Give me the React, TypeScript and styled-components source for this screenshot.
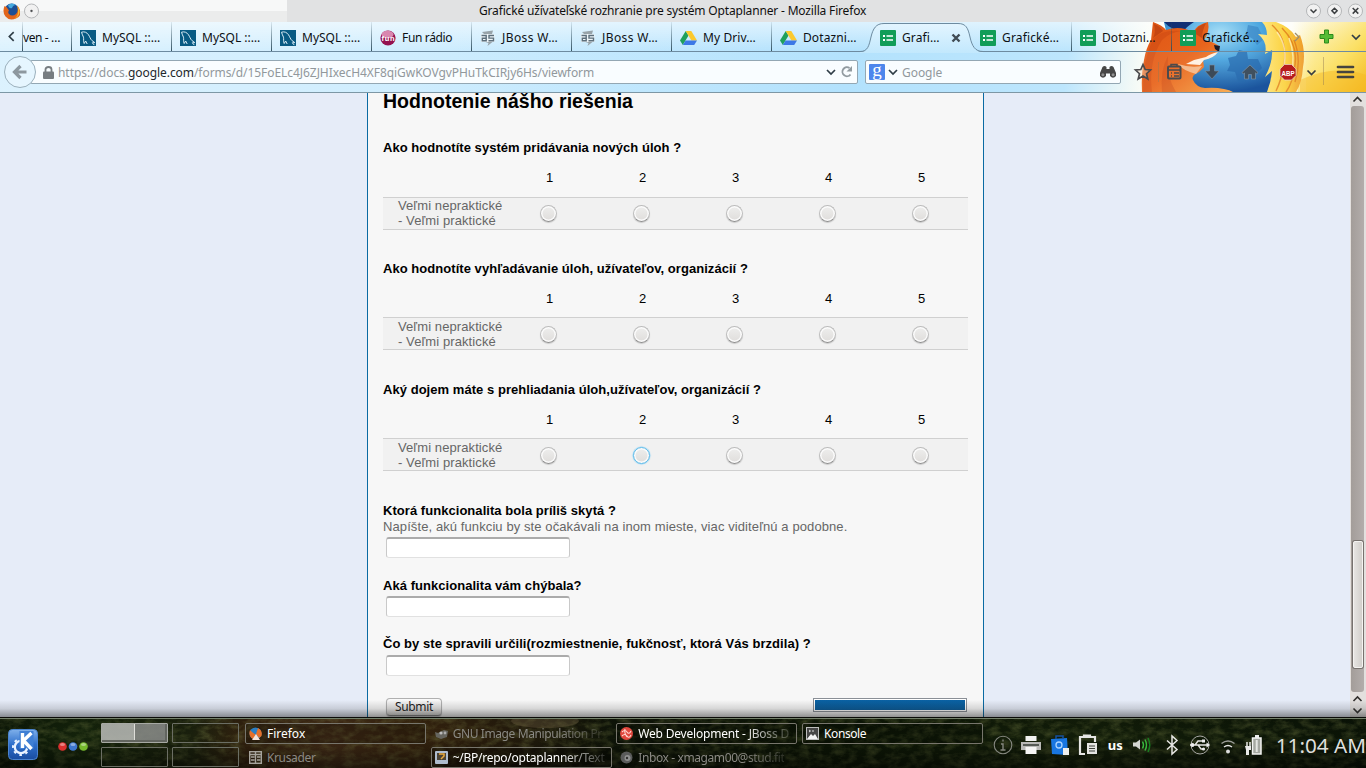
import React from 'react';
import styled, { createGlobalStyle, css } from 'styled-components';

const ui = `"Noto Sans", "Open Sans", sans-serif`;

const Global = createGlobalStyle`
  * { box-sizing: border-box; }
  body { margin: 0; background: #e6ecf8; overflow: hidden; }
  svg { display: block; flex: none; }
`;

const Screen = styled.div`
  width: 1366px;
  height: 768px;
  display: flex;
  flex-direction: column;
  overflow: hidden;
  font-family: ${ui};
`;

/* ---------- window title ---------- */
const TitleBar = styled.header`
  height: 22px;
  flex: none;
  display: grid;
  grid-template-columns: 287px 1fr 60px;
  align-items: center;
  background: #e1e2e3;
`;
const TitleLeft = styled.div`
  height: 22px;
  display: flex;
  align-items: center;
  gap: 4px;
  padding-left: 3px;
  background: linear-gradient(#f7f8f8 0 50%, #ebecec 50%);
`;
const TitleText = styled.div`
  font-size: 12px;
  line-height: 20px;
  letter-spacing: -0.17px;
  color: #101010;
  padding-left: 192px;
  white-space: nowrap;
`;
const TitleButtons = styled.div`
  display: flex;
  gap: 6px;
`;

/* ---------- browser chrome ---------- */
const Chrome = styled.div`
  position: relative;
  height: 71px;
  flex: none;
  display: flex;
  flex-direction: column;
  border-bottom: 1px solid #7d97a5;
  background: linear-gradient(rgba(255, 255, 255, 0.55), rgba(255, 255, 255, 0) 40%),
    linear-gradient(97deg, #dcf2fe 0, #cfedfe 30%, #b3e2fd 62%, #bde6fd 78%, #fdfdf5 84%, #fdfdf5 94%, #fbe98c 96%, #f6d749 100%);
`;
const Persona = styled.svg`
  position: absolute;
  left: 1140px;
  top: 0;
`;
const ActiveShape = styled.svg`
  position: absolute;
  left: 860px;
  top: 0;
`;
const TabRow = styled.div`
  position: relative;
  height: 30px;
  display: flex;
  flex: none;
  border-bottom: 1px solid #6d8ba0;
`;
const ScrollLeft = styled.div`
  width: 22px;
  display: flex;
  align-items: center;
  justify-content: center;
`;
const Tab = styled.div<{ $w?: number; $edge?: boolean; $active?: boolean }>`
  width: ${p => p.$w ?? 100}px;
  flex: none;
  display: flex;
  align-items: center;
  gap: 6px;
  padding: 2px 0 0 ${p => (p.$w ? 0 : 8)}px;
  border-left: 1px solid transparent;
  ${p => p.$edge && css`border-image: linear-gradient(rgba(40, 70, 90, 0.05), #32505f) 1;
    border-width: 0 0 0 1px; border-style: solid;`}
  z-index: ${p => (p.$active ? 2 : 1)};
`;
const TabLabel = styled.span<{ $sp?: number }>`
  font-size: 12px;
  line-height: 16px;
  letter-spacing: ${p => p.$sp ?? 0.05}px;
  color: #0c1014;
  white-space: nowrap;
`;
const TabEnd = styled.div`
  flex: 1;
  display: flex;
  align-items: center;
  padding-left: 21px;
  gap: 17px;
  z-index: 1;
`;
const NavRow = styled.div`
  position: relative;
  height: 40px;
  display: flex;
  align-items: center;
`;
const BackButton = styled.div`
  width: 32px;
  height: 32px;
  margin-left: 4px;
  border-radius: 50%;
  border: 1px solid #9bb0bc;
  background: #e6f6ff;
  display: flex;
  align-items: center;
  justify-content: center;
  z-index: 1;
`;
const Field = styled.div<{ $w: number; $ml: number; $pl: number }>`
  width: ${p => p.$w}px;
  margin-left: ${p => p.$ml}px;
  padding: 0 4px 0 ${p => p.$pl}px;
  height: 24px;
  display: flex;
  align-items: center;
  border: 1px solid #93a7b3;
  border-radius: 2px;
  background: #f9fdff;
`;
const Url = styled.span`
  flex: 1;
  margin-left: 4px;
  font-size: 12px;
  letter-spacing: -0.06px;
  color: #91989c;
  white-space: nowrap;
  b { font-weight: 400; color: #22282c; }
`;
const GoogleBadge = styled.span`
  width: 16px;
  height: 16px;
  margin-right: 3px;
  border-radius: 1px;
  background: #4d86ec;
  color: #fff;
  font: 19px/11px "Liberation Serif", serif;
  text-align: center;
`;

/* ---------- page ---------- */
const Page = styled.main`
  position: relative;
  flex: 1;
  min-height: 0;
  overflow: hidden;
  display: flex;
  background: #e6ecf8;
`;
const Shade = styled.div`
  position: absolute;
  left: 0;
  right: 0;
  bottom: 0;
  height: 17px;
  background: linear-gradient(rgba(20, 20, 20, 0), rgba(20, 20, 20, 0.14) 50%, rgba(20, 20, 20, 0.45));
`;
const Gutter = styled.div`
  width: 367px;
  flex: none;
`;
const Form = styled.form`
  width: 617px;
  padding: 0 15px;
  background: #f7f7f7;
  border-left: 1px solid #0a6aa3;
  border-right: 1px solid #0a6aa3;
  font-family: "Liberation Sans", Arial, sans-serif;
  font-size: 13px;
  line-height: 15px;
  color: #000;
`;
const Heading = styled.h2`
  margin: -3px 0 27px;
  font-size: 19.5px;
  line-height: 23px;
  letter-spacing: 0.03px;
`;
const Question = styled.section<{ $h: number }>`
  height: ${p => p.$h}px;
`;
const QTitle = styled.div`
  font-weight: 700;
  letter-spacing: 0.045px;
  white-space: nowrap;
`;
const Help = styled.div`
  color: #666;
  line-height: 17px;
  margin-bottom: -1px;
  letter-spacing: 0.095px;
`;
const Scale = styled.div`
  display: grid;
  grid-template-columns: 119px repeat(5, 93px);
`;
const Num = styled.div<{ $h: number }>`
  height: ${p => p.$h}px;
  padding: 15px 0 0 2px;
  text-align: center;
`;
const ScaleRow = styled(Scale)`
  height: 33px;
  width: 585px;
  background: #f1f1f1;
  border: solid #d0d0d0;
  border-width: 1px 0;
`;
const RowLabel = styled.div<{ $pt: number }>`
  padding: ${p => p.$pt}px 0 0 15px;
  color: #666;
  letter-spacing: 0.09px;
  white-space: nowrap;
`;
const RadioCell = styled.div<{ $pt: number }>`
  display: flex;
  justify-content: center;
  padding-top: ${p => p.$pt}px;
`;
const Radio = styled.span<{ $hot?: boolean }>`
  width: 17px;
  height: 17px;
  border-radius: 50%;
  border: 1px solid ${p => (p.$hot ? '#5bbcec' : '#bdbdbd')};
  border-bottom-color: ${p => (p.$hot ? '#5bbcec' : '#8d8d8d')};
  background: linear-gradient(#eeeeed, #dfdddb);
  box-shadow: inset 0 0 0 1.5px #fbfbfb, ${p => (p.$hot ? '0 0 1px 0.5px #8fd2f5' : '0 1px 1px rgba(0,0,0,.16)')};
`;
const TextBox = styled.input<{ $mt?: number }>`
  display: block;
  width: 184px;
  height: 21px;
  margin: ${p => p.$mt ?? 3}px 0 0 3px;
  padding: 0;
  border: 1px solid #c9c9c9;
  border-top: 2px solid #ababab;
  border-bottom-color: #e1e1e1;
  border-radius: 3px;
  background: #fff;
`;
const Footer = styled.div`
  display: flex;
  justify-content: space-between;
  padding: 0 1px 0 3px;
`;
const Submit = styled.button`
  width: 56px;
  height: 18px;
  padding: 0;
  border: 1px solid #b0b0b0;
  border-bottom-color: #858585;
  border-radius: 4px;
  background: linear-gradient(#fafafa, #d6d4d2);
  box-shadow: 0 1px 1px rgba(0, 0, 0, 0.2);
  font: 12px/14px ${ui};
  letter-spacing: -0.3px;
  color: #1c1c1c;
`;
const Progress = styled.div`
  width: 154px;
  height: 14px;
  border: 1px solid #8a8f96;
  padding: 1px;
  background: linear-gradient(#0a62a4, #0a5b98) content-box, #fff;
`;
const Scrollbar = styled.div`
  width: 16px;
  margin-left: auto;
  display: flex;
  flex-direction: column;
  align-items: center;
  background: #e3e0de;
`;
const Track = styled.div`
  width: 13px;
  height: 586px;
  margin: 1px 1px 0 0;
  padding: 435px 1px 0 2px;
  border-radius: 3px;
  background: linear-gradient(90deg, #a39d99, #b3adab);
`;
const Thumb = styled.div`
  height: 127px;
  border: 1px solid #f5f3f1;
  border-radius: 2px;
  box-shadow: 0 0 0 1px #77726e;
  background: linear-gradient(90deg, #e6e4e1, #d2cfcb);
`;

/* ---------- panel ---------- */
const Panel = styled.footer`
  position: relative;
  height: 51px;
  flex: none;
  display: flex;
  background: #0c1408;
  color: #fff;
  overflow: hidden;
`;
const Ground = styled.svg`
  position: absolute;
  left: 0;
  top: 0;
`;
const Launch = styled.div`
  position: relative;
  width: 101px;
  display: flex;
  align-items: center;
  padding: 3px 0 0 8px;
  gap: 19px;
`;
const Pager = styled.div`
  position: relative;
  width: 144px;
  padding-top: 6px;
  display: grid;
  grid-template: 20px 20px / 67px 67px;
  gap: 4px;
`;
const Desk = styled.div<{ $on?: boolean }>`
  border: 1px solid ${p => (p.$on ? '#a7a9a4' : '#6b6e64')};
  border-radius: 1px;
  ${p => p.$on && css`background: linear-gradient(90deg, rgba(178, 180, 176, 0.9) 0 32px, #deded9 32px 33px, rgba(138, 140, 138, 0.85) 33px);
    box-shadow: inset -2px -2px 0 #62655f;`}
`;
const Tasks = styled.div`
  position: relative;
  width: 750px;
  padding-top: 6px;
  display: grid;
  grid-template-rows: 21px 21px;
  grid-template-columns: repeat(4, 181px);
  grid-auto-flow: row;
  gap: 3px 4.7px;
`;
const Task = styled.div<{ $box?: boolean; $dim?: boolean; $fade?: boolean; $sp?: number }>`
  display: flex;
  align-items: center;
  gap: 5px;
  padding-left: 3px;
  border: 1px solid ${p => (p.$box ? '#77756c' : 'transparent')};
  border-radius: 2px;
  font-size: 12px;
  line-height: 17px;
  letter-spacing: ${p => p.$sp ?? 0}px;
  white-space: nowrap;
  color: ${p => (p.$dim ? '#8a8983' : '#fff')};
  background: ${p => (p.$box ? 'rgba(0,0,0,.22)' : 'none')};
  span {
    ${p => p.$fade && css`mask-image: linear-gradient(90deg, #000 105px, rgba(0, 0, 0, 0.15) 152px);`}
  }
`;
const Tray = styled.div`
  position: relative;
  flex: 1;
  display: flex;
  align-items: center;
  padding-top: 4px;
`;
const TraySlot = styled.div<{ $w: number }>`
  width: ${p => p.$w}px;
  flex: none;
  display: flex;
  justify-content: center;
  font-size: 13px;
  font-weight: 700;
  line-height: 20px;
`;
const Clock = styled.div`
  padding-left: 7px;
  font-size: 20.7px;
  line-height: 26px;
  white-space: nowrap;
  color: #dfdfdd;
`;

/* ---------- drawings ---------- */
const Chevron = ({ dir = 'down', s = 10, c = '#2f3d46', w = 1.7 }: { dir?: string; s?: number; c?: string; w?: number }) => {
  const d: Record<string, string> = { down: 'M1 3l4 4 4-4', up: 'M1 7l4-4 4 4', left: 'M7 1L3 5l4 4', right: 'M3 1l4 4-4 4' };
  return <svg width={s} height={s} viewBox="0 0 10 10" fill="none" stroke={c} strokeWidth={w}><path d={d[dir]} /></svg>;
};
const WinButton = ({ kind }: { kind: string }) => (
  <svg width="15" height="16" viewBox="0 0 15 16">
    <circle cx="7.5" cy="8" r="7" fill="#f1f1f1" stroke="#b4b6b8" />
    <g fill="none" stroke="#3b3e40" strokeWidth="1.5">
      {kind === 'min' && <path d="M4.5 6.5l3 3 3-3" />}
      {kind === 'max' && <path d="M7.5 5.200l2.600 2.600-2.600 2.600-2.600-2.600z" />}
      {kind === 'close' && <path d="M4.700 5l5.600 5.600M10.300 5l-5.600 5.600" />}
      {kind === 'dot' && <circle cx="7.5" cy="8" r=".4" />}
    </g>
  </svg>
);
const FirefoxLogo = ({ s = 17 }: { s?: number }) => (
  <svg width={s} height={s} viewBox="0 0 17 17">
    <circle cx="8.700" cy="8" r="7.400" fill="#1d4f95" />
    <path d="M5 2q4-3 8 0-3 0-4 3-3 1-4-3z" fill="#45a9de" />
    <path d="M1.500 3Q-1 9 2.500 13.500T13 15.500 16 5q-1-2-2-2.500 2 5-1 8.500-4 3-7 0-1.500-2 0-3.500L3.500 4z" fill="#e2651b" />
    <path d="M14 2.500q3.500 4 2.300 8T10 16.600q4-2 4.800-6T14 2.500z" fill="#f8b62c" />
  </svg>
);
const MySql = () => (
  <svg width="16" height="16" viewBox="0 0 16 16">
    <rect width="16" height="16" fill="#085a83" />
    <path d="M1.500 2.200c3-1 5.500.3 7 2.600 1.300 2 2 4.300 3.300 5.600l3 2.200-2.500.2 2 2.300M1.500 2.200c.2 2 1.600 3.300 2 5 .4 2-.3 4 .7 6.300l1.500-2.500 1.500 3" fill="none" stroke="#d7ebf5" strokeWidth="1" />
  </svg>
);
const FunIcon = () => (
  <svg width="16" height="16" viewBox="0 0 16 16">
    <circle cx="8" cy="8" r="7.600" fill="#94124f" />
    <ellipse cx="7.500" cy="4.500" rx="6" ry="3.800" fill="#d987af" />
    <text x="1.500" y="10.500" fontSize="7.500" fontWeight="700" fill="#fff" fontFamily="Liberation Sans" textLength="13">fun</text>
  </svg>
);
const JBoss = () => (
  <svg width="16" height="16" viewBox="0 0 16 16">
    <path d="M2 2l11-1.500-1 3.500H4zM4 11.500h9L7.500 16l1-3z" fill="#98a3a9" />
    <rect x="1" y="4" width="13.500" height="8" fill="#eef5f8" />
    <path d="M1.500 5.500h4.700v5.200H2.300V8.200h3.700M14 5.500H9v2.600h4.500v2.600H8.500" fill="none" stroke="#5d6f7b" strokeWidth="1.400" />
  </svg>
);
const Drive = () => (
  <svg width="17" height="16" viewBox="0 0 17 16">
    <path d="M5.700 1L0 10.500 2.800 15l5.700-9.500z" fill="#1fa05c" />
    <path d="M5.700 1h5.600L17 10.500h-5.600z" fill="#fbc92e" />
    <path d="M5.600 10.500H17L14.200 15H2.800z" fill="#3c78e6" />
  </svg>
);
const Sheet = () => (
  <svg width="16" height="16" viewBox="0 0 16 16">
    <rect width="16" height="16" rx="1" fill="#119d58" />
    <path d="M6.500 6h6.500M6.500 10h6.500" stroke="#fff" strokeWidth="1.300" />
    <path d="M3 6h2M3 10h2" stroke="#fff" strokeWidth="1.800" />
  </svg>
);
const PersonaArt = () => (
  <Persona width="226" height="70" viewBox="0 0 226 70">
    <defs>
      <radialGradient id="globe" cx=".5" cy=".15" r=".85"><stop offset="0" stopColor="#a6def6" /><stop offset=".45" stopColor="#4aa5df" /><stop offset="1" stopColor="#0d4a97" /></radialGradient>
      <linearGradient id="fur" x2="1" y2="1"><stop offset="0" stopColor="#dd5415" /><stop offset=".5" stopColor="#e8641c" /><stop offset="1" stopColor="#f9a94a" /></linearGradient>
      <linearGradient id="tail" x2="1"><stop offset="0" stopColor="#ffe98a" /><stop offset=".6" stopColor="#fbd23f" /><stop offset="1" stopColor="#ee9a2a" /></linearGradient>
      <linearGradient id="sand" x2="1" y2="1"><stop offset="0" stopColor="#fffbe0" stopOpacity="0" /><stop offset=".6" stopColor="#fbe065" /><stop offset="1" stopColor="#f4b81f" /></linearGradient>
    </defs>
    <rect x="158" width="68" height="70" fill="url(#sand)" />
    <path d="M160 58q35-16 66-5v17h-66z" fill="#f6b923" opacity=".5" />
    <path d="M24 0H126Q142 32 132 70H40z" fill="url(#globe)" />
    <path d="M24 0h30Q46 5 44 9q-12 0-20-9z" fill="#122f74" />
    <path d="M88 36l8-2 3-6 8 2 1 7 10 0 4 9-6 6-9-1-2 9-7-1-3-9-8-1 3-6z" fill="#1d63aa" opacity=".7" />
    <path d="M108 3l10 2 6 12-7 6-4-6-7-4z" fill="#3c87c6" opacity=".7" />
    <path d="M2 70Q1 52 4 38 6 26 11 18L13 0q9 3 13 8 14-5 27 2Q58 2 68 0q2 9-4 18 8 1 15 6 1 3-1 6-8 6-15 8l1 7-5 5q-8 3-6 8 3 7 12 8 10-1 19 1 6 1 9 3z" fill="url(#fur)" />
    <path d="M78 30q-8 2-12 5l-12 3-8 4 14 1 4-5q10-2 14-8z" fill="#fff1e2" />
    <path d="M62 44l-6 8q-14-4-18-10 12 4 24 2z" fill="#f7c8a0" opacity=".8" />
    <path d="M74 23l6 1-1 6-4-3z" fill="#1c1a26" />
    <path d="M14 2q2 8-1 14l10-7q-3-5-9-7zM54 11q4-8 12-10-4 8-4 15z" fill="#b23a10" opacity=".6" />
    <path d="M12 70Q8 40 22 18q8-8 20-9-20-2-29 8Q2 40 3 70zM22 70q-2-22 6-36-2 20 8 36z" fill="#bd3c10" opacity=".3" />
    <path d="M122 0h14q14 5 20 15l4-2q6 16 3 32-1 16-7 25h-29q4-10 5-21l-7 6q8-15 7-27l-7 4q3-12-7-20l9 1q0-8-5-13z" fill="url(#tail)" />
    <path d="M132 3q16 14 12 40-3 16-8 26M142 6q18 18 12 42-2 14-8 22M154 18q8 20 1 42" fill="none" stroke="#dc7418" strokeWidth="1.400" opacity=".75" />
    <path d="M137 10q12 16 6 38M149 16q7 18 2 38" fill="none" stroke="#fff7c8" strokeWidth="1.500" opacity=".7" />
    <rect y="30" width="166" height="40" fill="#fff" opacity=".06" />
  </Persona>
);
const ToolIcons = () => (
  <svg width="245" height="40" viewBox="1121 52 245 40">
    <g stroke="#4a4a4c" fill="none" strokeWidth="2">
      <path d="M1143 64.500l2.200 5 5.300.5-4 3.700 1.300 5.300-4.800-2.900-4.800 2.900 1.300-5.300-4-3.700 5.300-.5z" strokeWidth="1.700" fill="#f4d9bb" fillOpacity=".4" />
      <rect x="1168" y="66.500" width="12.500" height="12" rx="1" /><path d="M1168 70h12M1171 73h1m2 0h5M1171 76h1m2 0h5M1171 66v-1.500h6V66" strokeWidth="1.500" />
    </g>
    <path d="M1209.500 65h5v6h4.500l-7 8-7-8h4.500z" fill="#3c4a58" stroke="#7e91a4" strokeWidth=".6" />
    <path d="M1242 72.500l8-7.500 8 7.500-1.300 1.300-1.200-1V79h-4v-4.500h-3V79h-4v-6l-1.200 1z" fill="#40505f" stroke="#8399ad" strokeWidth=".6" />
    <path d="M1284.500 64.500h7l4.500 4.500v6.500l-4.500 4.500h-7l-4.500-4.500V69z" fill="#b71c1c" stroke="#eadad0" strokeWidth=".7" />
    <text x="1281.500" y="75.500" fontFamily="Liberation Sans" fontSize="8" fontWeight="700" fill="#fff" textLength="13" lengthAdjust="spacingAndGlyphs">ABP</text>
    <path d="M1307.500 70.500l4 4 4-4" stroke="#393d40" strokeWidth="1.700" fill="none" />
    <path d="M1158.500 62v20M1323.500 57v28" stroke="#937b52" strokeOpacity=".45" />
    <path d="M1338 67h15M1338 72h15M1338 77h15" stroke="#45433f" strokeWidth="2.700" strokeLinecap="round" />
  </svg>
);
const Binoculars = () => (
  <svg width="18" height="14" viewBox="2 0 18 14">
    <path d="M3.500 2q2-2 4 0v2h3V2q2-2 4 0l2.500 6v3q-3 3.500-6 0V8.500H7V11q-3 3.500-6 0V8z" fill="#474747" transform="translate(3)" />
    <circle cx="6.900" cy="9.800" r="1.500" fill="#909090" /><circle cx="17.100" cy="9.800" r="1.500" fill="#909090" />
  </svg>
);
const GroundArt = () => (
  <Ground width="1366" height="51" viewBox="0 0 1366 51">
    <defs>
      <linearGradient id="soil" x2="1">
        <stop offset="0" stopColor="#0c1707" /><stop offset=".06" stopColor="#14230b" /><stop offset=".14" stopColor="#1a200d" />
        <stop offset=".18" stopColor="#33220f" /><stop offset=".24" stopColor="#412b17" /><stop offset=".3" stopColor="#37240f" />
        <stop offset=".37" stopColor="#251b0c" /><stop offset=".45" stopColor="#0e1408" /><stop offset=".6" stopColor="#0d1606" />
        <stop offset=".8" stopColor="#121d09" /><stop offset="1" stopColor="#0a1306" />
      </linearGradient>
      <linearGradient id="dark" x2="0" y2="1"><stop offset="0" stopOpacity=".1" /><stop offset=".4" stopOpacity="0" /><stop offset="1" stopOpacity=".5" /></linearGradient>
      <filter id="grain" x="0" y="0" width="100%" height="100%">
        <feTurbulence type="fractalNoise" baseFrequency=".09 .16" numOctaves="4" seed="8" />
        <feColorMatrix values="0 0 0 0 .25  0 0 0 0 .28  0 0 0 0 .08  1.200 0 0 0 -.45" />
      </filter>
    </defs>
    <rect width="1366" height="51" fill="url(#soil)" />
    <rect width="1366" height="51" filter="url(#grain)" opacity=".55" />
    <ellipse cx="545" cy="4" rx="34" ry="7" fill="#7a6a4b" opacity=".35" />
    <rect width="1366" height="51" fill="url(#dark)" />
    <path d="M0 .5h1366" stroke="#0b0c08" /><path d="M0 1.500h1366" stroke="#74806a" />
  </Ground>
);
const KMenu = () => (
  <svg width="30" height="31" viewBox="0 0 30 31">
    <defs><linearGradient id="kb" x2="0" y2="1"><stop offset="0" stopColor="#7fb0ea" /><stop offset=".5" stopColor="#2e6fcb" /><stop offset="1" stopColor="#1a4da0" /></linearGradient></defs>
    <rect x=".5" y=".5" width="29" height="30" rx="4" fill="url(#kb)" stroke="#4a83cf" />
    <circle cx="13" cy="18" r="6.200" fill="none" stroke="#e8f2ff" strokeWidth="2.300" />
    <circle cx="13" cy="18" r="8" fill="none" stroke="#e8f2ff" strokeWidth="2" strokeDasharray="2.600 3.680" strokeDashoffset="1" />
    <path d="M11.500 2h14v18h-6l-2-2-2 2h-4z" fill="#3f7fd4" />
    <path d="M14.500 4v15M23.500 4l-8 7.500 8 8.500" stroke="#fff" strokeWidth="3.400" fill="none" />
  </svg>
);
const Dots = () => (
  <svg width="31" height="18" viewBox="0 0 31 18">
    <circle cx="5.500" cy="11.500" r="4.300" fill="#d9302e" /><circle cx="16" cy="11.500" r="4.300" fill="#3d77cf" /><circle cx="26.500" cy="11.500" r="4.300" fill="#76b82d" />
    <g fill="#fff" opacity=".4"><ellipse cx="5.500" cy="9.500" rx="2.500" ry="1.500" /><ellipse cx="16" cy="9.500" rx="2.500" ry="1.500" /><ellipse cx="26.500" cy="9.500" rx="2.500" ry="1.500" /></g>
  </svg>
);
const TaskIcon = ({ kind }: { kind: string }) => (
  <svg width="13" height="13" viewBox="0 0 13 13">
    {kind === 'ff' && <><circle cx="6.500" cy="6.500" r="6" fill="#2b7fc4" /><path d="M1 3Q-1 9 4 12l3-4L3 5zM9 1q5 3 3.500 8L10 11 7 7z" fill="#e5702a" /><path d="M3 13l4-6 4 6z" fill="#f6e4da" /></>}
    {kind === 'kr' && <g fill="none" stroke="#a6a39c" strokeWidth="1.400"><rect x=".7" y=".7" width="11.600" height="11.600" /><path d="M6.500 0v13M1 3.500h11M2 6h3.500M2 9h3.500M8 6h3.500M8 9h3.500" /></g>}
    {kind === 'gimp' && <><path d="M0 5l3 1 6-3 4 1-1 6-6 2-5-2z" fill="#66655f" /><circle cx="6" cy="6" r="1.600" fill="#bbb" /><circle cx="10" cy="6" r="1.400" fill="#aaa" /></>}
    {kind === 'term' && <><rect width="13" height="13" rx="1" fill="#aebccd" /><rect x="2" y="2" width="9" height="7" fill="#4b4335" /><path d="M4 3h5v2L6 8" stroke="#e9a93d" fill="none" strokeWidth="1.500" /></>}
    {kind === 'web' && <><circle cx="6.500" cy="6.500" r="6.500" fill="#e1483e" /><path d="M2 5q3-3 5 0t4-1M2 9q3-3 5 0t4-1M5 2q-1 4 2 8" stroke="#ffd9d3" fill="none" strokeWidth="1.100" /></>}
    {kind === 'mail' && <><circle cx="6.500" cy="6.500" r="6" fill="#5b5c5c" /><circle cx="7.500" cy="7" r="3" fill="#909191" /><circle cx="7" cy="7" r="1.200" fill="#333" /></>}
    {kind === 'kon' && <><rect x=".5" y=".5" width="12" height="12" fill="#464646" stroke="#bdbdbd" /><path d="M1 12l4-5 2 2 2-2 3 5z" fill="#f4f4f4" /><path d="M3 3l1.500 1L3 5M6 4h2" stroke="#ddd" fill="none" /></>}
  </svg>
);
const TrayIcon = ({ kind }: { kind: string }) => (
  <svg width="20" height="22" viewBox="0 0 20 22" fill="none" stroke="#e6e6e4" strokeWidth="1.500">
    {kind === 'info' && <g stroke="#85877f" strokeWidth="1.100"><circle cx="10" cy="11" r="8.800" /><path d="M10 5.500v2M8 10h2v6M7.500 16h5" strokeWidth="1.400" /></g>}
    {kind === 'print' && <g stroke="none"><path d="M4.500 2h11v5h-11z" fill="#f1f1f1" /><path d="M0 8h20v8H0z" fill="#b9b9b7" /><path d="M2 10h16v2H2z" fill="#555a55" /><path d="M4.500 13h11v7h-11z" fill="#f5f5f4" /></g>}
    {kind === 'bag' && <g stroke="none"><path d="M1 5l16-1 1 17-16-1z" fill="#1976e0" /><path d="M6 5V2h7v3" stroke="#14509e" strokeWidth="1.500" fill="none" /><circle cx="9" cy="11" r="3" stroke="#acd5ff" strokeWidth="1.300" fill="none" /><path d="M13 14h6v7h-6z" fill="#eee" /></g>}
    {kind === 'clip' && <><path d="M7 20H2V3h15v5M6 4V1.500h6V4" strokeWidth="2.200" /><path d="M9 9h10v11H9z" fill="#e5e5e2" stroke="none" /><path d="M11 12h6M11 14.500h6M11 17h6" stroke="#3c4138" strokeWidth="1.200" /></>}
    {kind === 'vol' && <><path d="M1 8.500h3L8 5.500v10l-4-3H1z" fill="#d4d6d1" stroke="none" /><path d="M10.500 7.500q2 3.500 0 7M13 5.500q3 5.500 0 11" stroke="#39b63c" /><path d="M16 4q3.500 7 0 14" stroke="#187f20" /></>}
    {kind === 'bt' && <path d="M5 6.500l10 9L10 20V2l5 4.500-10 9" />}
    {kind === 'usb' && <><circle cx="10" cy="11" r="9" strokeWidth="1" stroke="#a9a9a6" /><path d="M0 11h18M5 11l3-4h4M8 11l3 4h2" strokeWidth="1.400" /><circle cx="2.500" cy="11" r="1.900" fill="#eee" stroke="none" /><path d="M12 5.500h3v3h-3zM16.500 8.500L20 11l-3.500 2.500z" fill="#eee" stroke="none" /><circle cx="13.500" cy="15" r="1.600" fill="#eee" stroke="none" /></>}
    {kind === 'wifi' && <><path d="M3.500 9.500q6.500-5 13 0" stroke="#9b9d98" /><path d="M6 13q4-3 8 0" /><circle cx="10" cy="17.500" r="2" fill="#ddd" stroke="none" /></>}
    {kind === 'bat' && <><path d="M7.500 4h8.500v16H7.500z" fill="#a5a8a1" stroke="#f4f4f2" strokeWidth="1.500" /><path d="M10 1h4v3h-4z" fill="#eee" stroke="none" /><path d="M11.700 6v12" stroke="#e4e6e2" strokeWidth="2" /><path d="M2 8v4M5 8v4" /><path d="M0 12h6v4H4v5H1v-5z" fill="#e9e9e7" stroke="none" /></>}
  </svg>
);

const tabs: { label: string; icon?: React.ReactNode; w?: number; edge?: boolean; active?: boolean; sp?: number }[] = [
  { label: 'ven - …', w: 49, edge: true, sp: -0.4 },
  { label: 'MySQL ::…', icon: <MySql />, edge: true, sp: 0 },
  { label: 'MySQL ::…', icon: <MySql />, edge: true, sp: 0 },
  { label: 'MySQL ::…', icon: <MySql />, edge: true, sp: 0 },
  { label: 'Fun rádio', icon: <FunIcon />, edge: true, sp: -0.35 },
  { label: 'JBoss W…', icon: <JBoss />, edge: true, sp: 0.4 },
  { label: 'JBoss W…', icon: <JBoss />, edge: true, sp: 0.4 },
  { label: 'My Driv…', icon: <Drive />, edge: true, sp: 0.1 },
  { label: 'Dotazni…', icon: <Drive />, edge: true, sp: 0.1 },
  { label: 'Grafi…', icon: <Sheet />, active: true, sp: 0.1 },
  { label: 'Grafické…', icon: <Sheet />, sp: 0.15 },
  { label: 'Dotazni…', icon: <Sheet />, edge: true, sp: 0.1 },
  { label: 'Grafické…', icon: <Sheet />, edge: true, sp: 0.15 },
];

const CloseX = styled.svg`
  margin-left: 5px;
`;

const scales = [
  { title: 'Ako hodnotíte systém pridávania nových úloh ?', hot: 0, head: 42 },
  { title: 'Ako hodnotíte vyhľadávanie úloh, užívateľov, organizácií ?', hot: 0, head: 41 },
  { title: 'Aký dojem máte s prehliadania úloh,užívateľov, organizácií ?', hot: 2, head: 41 },
];
const nums = [1, 2, 3, 4, 5];

export default function App() {
  return (
    <Screen>
      <Global />
      <TitleBar>
        <TitleLeft><FirefoxLogo /><WinButton kind="dot" /></TitleLeft>
        <TitleText>Grafické užívateľské rozhranie pre systém Optaplanner - Mozilla Firefox</TitleText>
        <TitleButtons><WinButton kind="min" /><WinButton kind="max" /><WinButton kind="close" /></TitleButtons>
      </TitleBar>

      <Chrome>
        <PersonaArt />
        <TabRow>
          <ScrollLeft><Chevron dir="left" s={11} w={1.5} /></ScrollLeft>
          {tabs.map((t, i) => (
            <Tab key={i} $w={t.w} $edge={t.edge} $active={t.active}>
              {t.icon}
              <TabLabel $sp={t.sp}>{t.label}</TabLabel>
              {t.active && <CloseX width="10" height="10" viewBox="0 0 10 10"><path d="M1.500 1.500l7 7M8.500 1.500l-7 7" stroke="#414c54" strokeWidth="2.400" /></CloseX>}
            </Tab>
          ))}
          <TabEnd>
            <Chevron dir="right" c="#9c8f70" w={1.3} />
            <svg width="15" height="15" viewBox="0 0 15 15"><path d="M5.500 1h4v4.500H14v4H9.500V14h-4V9.500H1v-4h4.500z" fill="#54bb35" stroke="#2c8a1c" /></svg>
            <Chevron />
          </TabEnd>
        </TabRow>
        <ActiveShape width="125" height="31" viewBox="0 0 125 31">
          <defs><linearGradient id="act" x2="0" y2="1"><stop offset="0" stopColor="#e3f5ff" /><stop offset="1" stopColor="#c2e8fd" /></linearGradient></defs>
          <path d="M0 30c8 0 9-6 11-15S16 1.500 24 1.500h74c8 0 10 4.500 12 13.500s5 15 13 15V31H0z" fill="url(#act)" />
          <path d="M0 29.500c8 0 9-6 11-14.500S16 1.500 24 1.500h74c8 0 10 4.500 12 13.500s5 14.500 13 14.500" fill="none" stroke="#6d8ba0" />
        </ActiveShape>
        <NavRow>
          <BackButton>
            <svg width="16" height="16" viewBox="0 0 16 16"><path d="M8.500 2L2.500 8l6 6M3 8h11.500" fill="none" stroke="#8d989f" strokeWidth="3.200" /></svg>
          </BackButton>
          <Field $w={828} $ml={-6} $pl={12}>
            <svg width="11" height="13" viewBox="0 0 11 13"><rect y="5.500" width="11" height="7.500" rx="1" fill="#777d81" /><path d="M2.500 6V3.500q0-2.500 3-2.500t3 2.500V6" fill="none" stroke="#777d81" strokeWidth="1.800" /></svg>
            <Url>https://docs.<b>google.com</b>/forms/d/15FoELc4J6ZJHIxecH4XF8qiGwKOVgvPHuTkCIRjy6Hs/viewform</Url>
            <Chevron />
            <svg width="17" height="14" viewBox="-4 0 17 14"><path d="M10.500 9.500A4.500 4.500 0 1 1 9.500 3" fill="none" stroke="#929ba0" strokeWidth="1.900" /><path d="M12 1v5.500H6.500z" fill="#929ba0" /></svg>
          </Field>
          <Field $w={256} $ml={7} $pl={3}>
            <GoogleBadge>g</GoogleBadge>
            <Chevron />
            <Url>Google</Url>
            <Binoculars />
          </Field>
          <ToolIcons />
        </NavRow>
      </Chrome>

      <Page>
        <Gutter />
        <Form>
          <Heading>Hodnotenie nášho riešenia</Heading>
          {scales.map(q => (
            <Question key={q.title} $h={121}>
              <QTitle>{q.title}</QTitle>
              <Scale>
                <span />
                {nums.map(n => <Num key={n} $h={q.head}>{n}</Num>)}
              </Scale>
              <ScaleRow>
                <RowLabel $pt={42 - q.head}>Veľmi nepraktické<br />- Veľmi praktické</RowLabel>
                {nums.map(n => <RadioCell key={n} $pt={49 - q.head}><Radio $hot={q.hot === n} /></RadioCell>)}
              </ScaleRow>
            </Question>
          ))}
          <Question $h={75}>
            <QTitle>Ktorá funkcionalita bola príliš skytá ?</QTitle>
            <Help>Napíšte, akú funkciu by ste očakávali na inom mieste, viac viditeľnú a podobne.</Help>
            <TextBox />
          </Question>
          <Question $h={58}>
            <QTitle>Aká funkcionalita vám chýbala?</QTitle>
            <TextBox />
          </Question>
          <Question $h={62}>
            <QTitle>Čo by ste spravili určili(rozmiestnenie, fukčnosť, ktorá Vás brzdila) ?</QTitle>
            <TextBox $mt={4} />
          </Question>
          <Footer>
            <Submit type="button">Submit</Submit>
            <Progress />
          </Footer>
        </Form>
        <Scrollbar>
          <svg width="16" height="12" viewBox="0 0 16 12"><path d="M3.500 8.500l4-4 4 4" stroke="#32302e" strokeWidth="1.600" fill="none" /></svg>
          <Track><Thumb /></Track>
          <svg width="16" height="25" viewBox="0 0 16 25"><path d="M3.500 9l4-4 4 4M3.500 16.500l4 4 4-4" stroke="#32302e" strokeWidth="1.600" fill="none" /></svg>
        </Scrollbar>
        <Shade />
      </Page>

      <Panel>
        <GroundArt />
        <Launch><KMenu /><Dots /></Launch>
        <Pager><Desk $on /><Desk /><Desk /><Desk /></Pager>
        <Tasks>
          <Task $box><TaskIcon kind="ff" /><span>Firefox</span></Task>
          <Task $dim $fade $sp={-0.4}><TaskIcon kind="gimp" /><span>GNU Image Manipulation Pr</span></Task>
          <Task $box $fade $sp={-0.2}><TaskIcon kind="web" /><span>Web Development - JBoss D</span></Task>
          <Task $box $sp={-0.4}><TaskIcon kind="kon" /><span>Konsole</span></Task>
          <Task $dim $sp={-0.35}><TaskIcon kind="kr" /><span>Krusader</span></Task>
          <Task $box $fade $sp={-0.25}><TaskIcon kind="term" /><span>~/BP/repo/optaplanner/Text</span></Task>
          <Task $dim $fade $sp={-0.4}><TaskIcon kind="mail" /><span>Inbox - xmagam00@stud.fit</span></Task>
        </Tasks>
        <Tray>
          <TraySlot $w={16}><TrayIcon kind="info" /></TraySlot>
          <TraySlot $w={40}><TrayIcon kind="print" /></TraySlot>
          <TraySlot $w={19}><TrayIcon kind="bag" /></TraySlot>
          <TraySlot $w={36}><TrayIcon kind="clip" /></TraySlot>
          <TraySlot $w={19}>us</TraySlot>
          <TraySlot $w={34}><TrayIcon kind="vol" /></TraySlot>
          <TraySlot $w={26}><TrayIcon kind="bt" /></TraySlot>
          <TraySlot $w={30}><TrayIcon kind="usb" /></TraySlot>
          <TraySlot $w={26}><TrayIcon kind="wifi" /></TraySlot>
          <TraySlot $w={28}><TrayIcon kind="bat" /></TraySlot>
          <Clock>11:04 AM</Clock>
        </Tray>
      </Panel>
    </Screen>
  );
}
